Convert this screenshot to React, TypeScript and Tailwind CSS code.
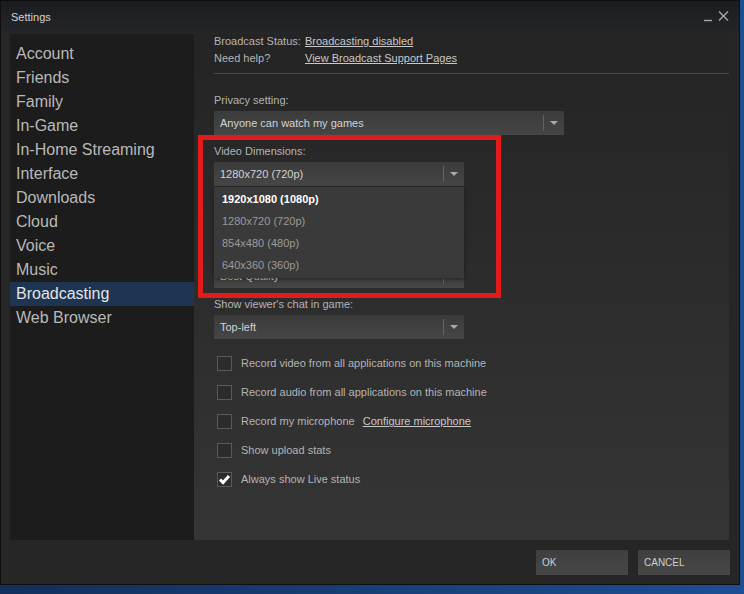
import React from "react";

type Setting = { label: string; value: string; wide?: boolean; open?: boolean; covered?: "all" | "label" };

const MENU = [
  "Account",
  "Friends",
  "Family",
  "In-Game",
  "In-Home Streaming",
  "Interface",
  "Downloads",
  "Cloud",
  "Voice",
  "Music",
  "Broadcasting",
  "Web Browser",
];

// "covered": queda tapado por la lista desplegada
const SETTINGS: Setting[] = [
  { label: "Privacy setting:", value: "Anyone can watch my games", wide: true },
  { label: "Video Dimensions:", value: "1280x720 (720p)", open: true },
  { label: "Maximum bit rate:", value: "2500 kbit/s", covered: "all" },
  { label: "Optimize encoding for:", value: "Best Quality", covered: "label" },
  { label: "Show viewer's chat in game:", value: "Top-left" },
];

const OPTIONS = ["1920x1080 (1080p)", "1280x720 (720p)", "854x480 (480p)", "640x360 (360p)"];

const CHECKS: { label: string; checked?: boolean; link?: string }[] = [
  { label: "Record video from all applications on this machine" },
  { label: "Record audio from all applications on this machine" },
  { label: "Record my microphone", link: "Configure microphone" },
  { label: "Show upload stats" },
  { label: "Always show Live status", checked: true },
];

function Arrow() {
  return (
    <svg width="8" height="4" viewBox="0 0 8 4" className="block">
      <polygon points="0,0 8,0 4,4" fill="#a9a9a9" />
    </svg>
  );
}

function Dropdown({ s }: { s: Setting }) {
  return (
    <div className={`relative mt-[3px] ${s.wide ? "w-[350px]" : "w-[250px]"} ${s.covered === "all" ? "invisible" : ""}`}>
      <div className="flex h-6 items-center bg-linear-to-b from-[#3b3b3b] to-[#464646] pl-[6px] text-[11px] text-[#d2d2d2]">
        <span className="flex-1 truncate">{s.value}</span>
        <div className="h-4 w-px bg-[#626262]" />
        <div className="flex w-5 justify-center">
          <Arrow />
        </div>
      </div>

      {/* lista abierta */}
      {s.open ? (
        <div className="absolute left-0 top-[25px] z-10 h-[91px] w-full bg-[#3a3a3a] pt-px shadow-[0_2px_4px_rgba(0,0,0,0.4)]">
          {OPTIONS.map((o, i) => (
            <div
              key={o}
              className={`flex h-[22px] items-center pl-[8px] text-[11px] ${
                i === 0 ? "font-bold text-white" : "text-[#9a9a9a]"
              }`}
            >
              {o}
            </div>
          ))}
        </div>
      ) : null}
    </div>
  );
}

function Checkbox({ checked }: { checked?: boolean }) {
  return (
    <div className="flex h-[15px] w-[15px] items-center justify-center border border-[#5a5a5a] bg-[#2c2c2c]">
      {checked ? (
        <svg width="13" height="13" viewBox="0 0 13 13">
          <path d="M2 6.5 L5 9.5 L11 3" stroke="white" strokeWidth="3" fill="none" />
        </svg>
      ) : null}
    </div>
  );
}

export default function App() {
  return (
    <div className="relative h-[594px] w-[744px] overflow-hidden bg-linear-to-r from-[#13305c] to-[#1d4e94] font-['Liberation_Sans',Arial,sans-serif]">
      <div className="flex h-[585px] w-[740px] flex-col border border-[#0f0f10] bg-[#262626]">
        {/* barra de título */}
        <div className="flex h-[33px] items-start bg-linear-to-b from-[#1a1c20] to-[#24262a] pl-[10px] pr-[10px]">
          <span className="mt-[9px] text-[11px] leading-[14px] text-[#d4d4d4]">Settings</span>
          <svg width="25" height="11" viewBox="0 0 25 11" className="ml-auto mt-[10px]">
            <line x1="0" y1="9.5" x2="8" y2="9.5" stroke="#a8a8a8" strokeWidth="1.4" />
            <line x1="15" y1="0.5" x2="24" y2="9.5" stroke="#a8a8a8" strokeWidth="1.4" />
            <line x1="24" y1="0.5" x2="15" y2="9.5" stroke="#a8a8a8" strokeWidth="1.4" />
          </svg>
        </div>

        {/* cuerpo */}
        <div className="flex h-[506px] pl-[9px] pr-[10px]">
          <nav className="w-[184px] bg-[#1c1c1c] pt-[8px]">
            {MENU.map((m) => (
              <div
                key={m}
                className={`flex h-6 items-center pl-[6px] text-[16px] ${
                  m === "Broadcasting" ? "bg-[#1d3552] text-[#e4e4e4]" : "text-[#b9b9b9]"
                }`}
              >
                {m}
              </div>
            ))}
          </nav>

          <main className="flex flex-1 flex-col bg-linear-to-b from-[#242424] to-[#353535] pl-[20px] text-[11px] text-[#b4b4b4]">
            <div className="flex h-[15px] items-center">
              <span className="w-[91px]">Broadcast Status:</span>
              <span className="text-[#c8c8c8] underline">Broadcasting disabled</span>
            </div>
            <div className="mt-[2px] flex h-[15px] items-center">
              <span className="w-[91px]">Need help?</span>
              <span className="text-[#c8c8c8] underline">View Broadcast Support Pages</span>
            </div>
            <div className="mt-[7px] h-px bg-[#4a4a4a]" />

            <div className="mt-[19px] flex flex-col">
              {SETTINGS.map((s, i) => (
                <div key={s.label} className={i ? "mt-[9px]" : ""}>
                  <div className={`h-[15px] leading-[15px] ${s.covered ? "invisible" : ""}`}>{s.label}</div>
                  <Dropdown s={s} />
                </div>
              ))}
            </div>

            <div className="mt-[10px] flex flex-col">
              {CHECKS.map((c) => (
                <div key={c.label} className="flex h-[29px] items-center pl-[3px]">
                  <Checkbox checked={c.checked} />
                  <span className="ml-[9px]">{c.label}</span>
                  {c.link ? <span className="ml-[8px] text-[#c8c8c8] underline">{c.link}</span> : null}
                </div>
              ))}
            </div>
          </main>
        </div>

        {/* pie */}
        <div className="flex flex-1 justify-end gap-[10px] pr-[9px] pt-[10px]">
          {["OK", "CANCEL"].map((b) => (
            <button
              key={b}
              type="button"
              className="flex h-[25px] w-[92px] items-center bg-linear-to-b from-[#3f3f3f] to-[#474747] pl-[6px] text-[10px] text-[#cfcfcf]"
            >
              {b}
            </button>
          ))}
        </div>
      </div>

      {/* marco rojo de anotación */}
      <div className="pointer-events-none absolute left-[198px] top-[135px] z-20 h-[163px] w-[303px] border-[5px] border-[#e31b1b]" />
    </div>
  );
}
